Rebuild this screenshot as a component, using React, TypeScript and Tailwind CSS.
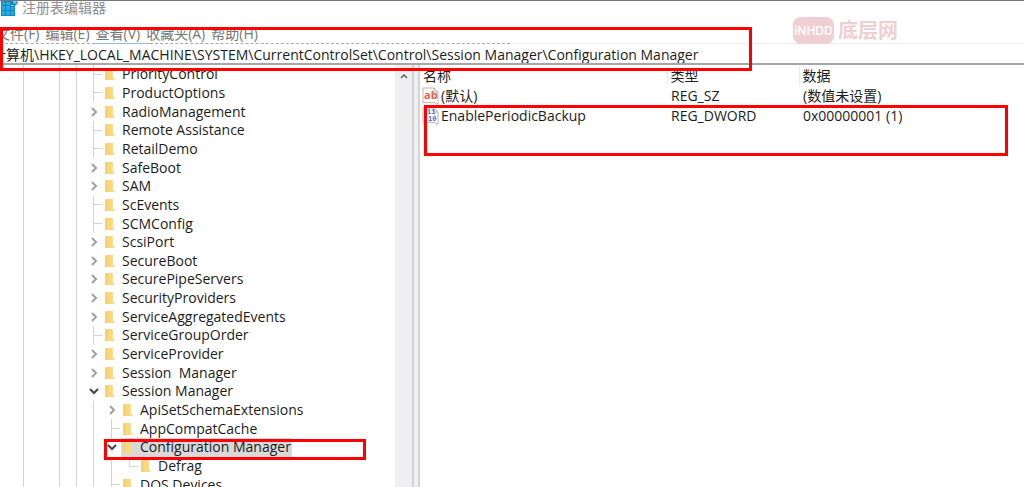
import clsx from "clsx";

type TreeNode = {
  name: string;
  depth: number;
  state?: "open" | "closed";
  selected?: boolean;
  last?: boolean;
};

const NODES: TreeNode[] = [
  { name: "PriorityControl", depth: 0 },
  { name: "ProductOptions", depth: 0 },
  { name: "RadioManagement", depth: 0, state: "closed" },
  { name: "Remote Assistance", depth: 0 },
  { name: "RetailDemo", depth: 0 },
  { name: "SafeBoot", depth: 0, state: "closed" },
  { name: "SAM", depth: 0, state: "closed" },
  { name: "ScEvents", depth: 0 },
  { name: "SCMConfig", depth: 0 },
  { name: "ScsiPort", depth: 0, state: "closed" },
  { name: "SecureBoot", depth: 0, state: "closed" },
  { name: "SecurePipeServers", depth: 0, state: "closed" },
  { name: "SecurityProviders", depth: 0, state: "closed" },
  { name: "ServiceAggregatedEvents", depth: 0, state: "closed" },
  { name: "ServiceGroupOrder", depth: 0 },
  { name: "ServiceProvider", depth: 0, state: "closed" },
  { name: "Session  Manager", depth: 0, state: "closed" },
  { name: "Session Manager", depth: 0, state: "open" },
  { name: "ApiSetSchemaExtensions", depth: 1, state: "closed" },
  { name: "AppCompatCache", depth: 1 },
  { name: "Configuration Manager", depth: 1, state: "open", selected: true },
  { name: "Defrag", depth: 2, last: true },
  { name: "DOS Devices", depth: 1 },
];

const VALUES = [
  { name: "(默认)", type: "REG_SZ", data: "(数值未设置)", kind: "string" },
  { name: "EnablePeriodicBackup", type: "REG_DWORD", data: "0x00000001 (1)", kind: "binary" },
];

const MENUS = ["文件(F)", "编辑(E)", "查看(V)", "收藏夹(A)", "帮助(H)"];

const KEY_PATH =
  "计算机\\HKEY_LOCAL_MACHINE\\SYSTEM\\CurrentControlSet\\Control\\Session Manager\\Configuration Manager";

function RegeditIcon() {
  return (
    <svg width="18" height="16" viewBox="0 0 18 16" aria-hidden="true">
      <path d="M1 0h10v5h4v10H1z" fill="#1285c6" />
      <path
        d="M2 1h3v3H2zM6 1h4v3H6zM2 5h3v4H2zM6 5h4v4H6zM11 6h3v3h-3zM2 10h3v4H2zM6 10h4v4H6zM11 10h3v4h-3z"
        fill="#27a9e1"
      />
      <path d="M11 0h6l1 2-3 3-4-1z" fill="#1583c4" />
      <path d="M13 0h3l1 2-3 1z" fill="#5ccbf5" />
    </svg>
  );
}

function FolderIcon() {
  return (
    <svg width="10" height="14" viewBox="0 0 10 14" className="shrink-0" aria-hidden="true">
      <path d="M1 1h7v9l2 3H0V2z" fill="#fbd978" />
      <path d="M1 1h2v12H0V2z" fill="#f7d07a" />
      <path d="M7 1h1v9l2 3H7z" fill="#f8dc93" />
    </svg>
  );
}

function ValueIcon({ kind }: { kind: string }) {
  return (
    <svg width="18" height="18" viewBox="0 0 18 18" className="shrink-0" aria-hidden="true">
      <path d="M1 1h11l4 4v12h-2l-2-2-2 1-3-1-2 1-2-1-2 1z" fill="#fff" stroke="#b4b4b4" />
      <path d="M12 1v4h4" fill="none" stroke="#b4b4b4" />
      {kind === "string" ? (
        <text x="2" y="12" fontSize="11" fontWeight="700" fontFamily="Open Sans" fill="#e8604c">
          ab
        </text>
      ) : (
        <g fontSize="7" fontWeight="700" fontFamily="Liberation Mono" fill="#4a63e0">
          <text x="5" y="7">11</text>
          <text x="6" y="14">10</text>
        </g>
      )}
    </svg>
  );
}

function Expander({ state }: { state: "open" | "closed" }) {
  return (
    <button
      type="button"
      aria-label={state === "open" ? "折叠" : "展开"}
      className="flex size-3 items-center justify-center bg-white"
    >
      <svg width="10" height="10" viewBox="0 0 10 10" fill="none" aria-hidden="true">
        {state === "open" ? (
          <path d="M1 3l4 4 4-4" stroke="#444" strokeWidth="2" />
        ) : (
          <path d="M3 1l4 4-4 4" stroke="#a0a0a0" strokeWidth="2" />
        )}
      </svg>
    </button>
  );
}

// One 18px column of the tree, drawn as a vertical rail
function Rail() {
  return (
    <span className="flex w-[18px] shrink-0 self-stretch pl-2">
      <span className="w-px bg-[#d4d4d4]" />
    </span>
  );
}

function Branch({ node }: { node: TreeNode }) {
  if (node.state) {
    return (
      <span className="flex w-[18px] shrink-0 items-center justify-center">
        <Expander state={node.state} />
      </span>
    );
  }
  return (
    <span className="flex w-[18px] shrink-0 self-stretch pl-2">
      <span className={clsx("w-px bg-[#d4d4d4]", node.last && "mb-2")} />
      <span className="h-px w-2 self-center bg-[#d4d4d4]" />
    </span>
  );
}

function TreeRow({ node }: { node: TreeNode }) {
  return (
    <li className="flex min-h-0 items-center" role="treeitem" aria-selected={!!node.selected}>
      {Array.from({ length: node.depth }, (_, i) => (
        <Rail key={i} />
      ))}
      <Branch node={node} />
      <span
        className={clsx(
          "flex items-center self-stretch pr-px pl-[2px]",
          node.selected && "bg-[#d9d9d9]",
        )}
      >
        <FolderIcon />
        <span className="pl-[7px] whitespace-pre">{node.name}</span>
      </span>
    </li>
  );
}

function KeyTree() {
  return (
    <nav aria-label="注册表项" className="relative flex w-[412px] shrink-0 overflow-hidden">
      <div className="flex shrink-0 pl-[23px]">
        <span className="w-px bg-[#d4d4d4]" />
        <span className="ml-[35px] w-px bg-[#d4d4d4]" />
        <span className="ml-4 w-px bg-[#d4d4d4]" />
      </div>
      <ul role="tree" className="grid h-[429px] flex-1 auto-rows-fr pl-2">
        {NODES.map((node, i) => (
          <TreeRow key={i} node={node} />
        ))}
      </ul>
      <div className="flex w-[17px] shrink-0 justify-center bg-[#efefef] pt-2">
        <svg width="8" height="6" viewBox="0 0 8 6" fill="none" aria-hidden="true">
          <path d="M1 5l3-3 3 3" stroke="#606060" strokeWidth="1.5" />
        </svg>
      </div>
      {/* highlight around the selected key */}
      <div className="pointer-events-none absolute top-[374px] left-[104px] h-[21px] w-[262px] border-[3px] border-[#fe0000]" />
    </nav>
  );
}

function ValueList() {
  return (
    <section className="relative min-w-0 flex-1 pt-px">
      <table className="w-full table-fixed text-left">
        <thead>
          <tr className="h-5">
            <th className="w-[247px] pl-[3px] font-normal">名称</th>
            <th className="w-[132px] border-l border-[#ececec] pl-[3px] font-normal">类型</th>
            <th className="border-l border-[#ececec] pl-[3px] font-normal">数据</th>
          </tr>
        </thead>
        <tbody>
          {VALUES.map((value) => (
            <tr key={value.name} className="h-5">
              <td>
                <span className="flex items-center gap-px pl-[2px]">
                  <ValueIcon kind={value.kind} />
                  {value.name}
                </span>
              </td>
              <td className="pl-1">{value.type}</td>
              <td className="pl-1">{value.data}</td>
            </tr>
          ))}
        </tbody>
      </table>
      <div className="pointer-events-none absolute top-[40px] left-1 h-[51px] w-[584px] border-[3px] border-[#fe0000]" />
    </section>
  );
}

function Watermark() {
  return (
    <div className="absolute top-4 left-[793px] flex items-center gap-1 text-[#efcfd1]">
      <span className="flex h-[27px] w-[41px] items-center justify-center rounded-lg bg-[#efcfd1] font-['Inter'] text-[12px] font-medium text-white">
        iNHDD
      </span>
      <span className="text-[20px] leading-[27px] font-bold">底层网</span>
    </div>
  );
}

export default function App() {
  return (
    <div className="relative flex h-screen flex-col overflow-hidden border-t border-[#777] bg-white font-['Open_Sans','Noto_Sans_CJK_SC',sans-serif] text-[14px] leading-[18px] text-[#1c1c1c]">
      <header className="flex h-[25px] shrink-0 items-start gap-1 text-[#8f8f8f]">
        <RegeditIcon />
        <h1 className="-mt-[2px]">注册表编辑器</h1>
      </header>
      <div className="flex h-4 shrink-0 items-center gap-1.5 text-[#777]">
        {MENUS.map((menu, i) => (
          <button key={menu} type="button" className={clsx("shrink-0", i === 0 && "-ml-1")}>
            {menu}
          </button>
        ))}
      </div>
      <div className="shrink-0">
        <div className="flex h-[2px] items-end">
          <span className="w-[95px] border-t border-dashed border-[#aaa]" />
          <span className="w-[55px] border-t border-[#8cbdec]" />
          <span className="w-[360px] border-t border-dashed border-[#aaa]" />
          <span className="flex-1 border-t border-[#f0f0f0]" />
        </div>
        <input
          aria-label="地址"
          defaultValue={KEY_PATH}
          className="-ml-2 block h-[19px] w-full outline-none"
        />
      </div>
      <main className="flex min-h-0 flex-1 border-t-2 border-[#a5a7ad]">
        <KeyTree />
        <div className="w-[8px] shrink-0 border-x-2 border-[#d3d4d8] bg-[#efefef]" />
        <ValueList />
      </main>
      <Watermark />
      {/* highlight around the menu and address bar */}
      <div className="pointer-events-none absolute top-[26px] left-0 h-[44px] w-[752px] border-[3px] border-[#fe0000]" />
    </div>
  );
}
